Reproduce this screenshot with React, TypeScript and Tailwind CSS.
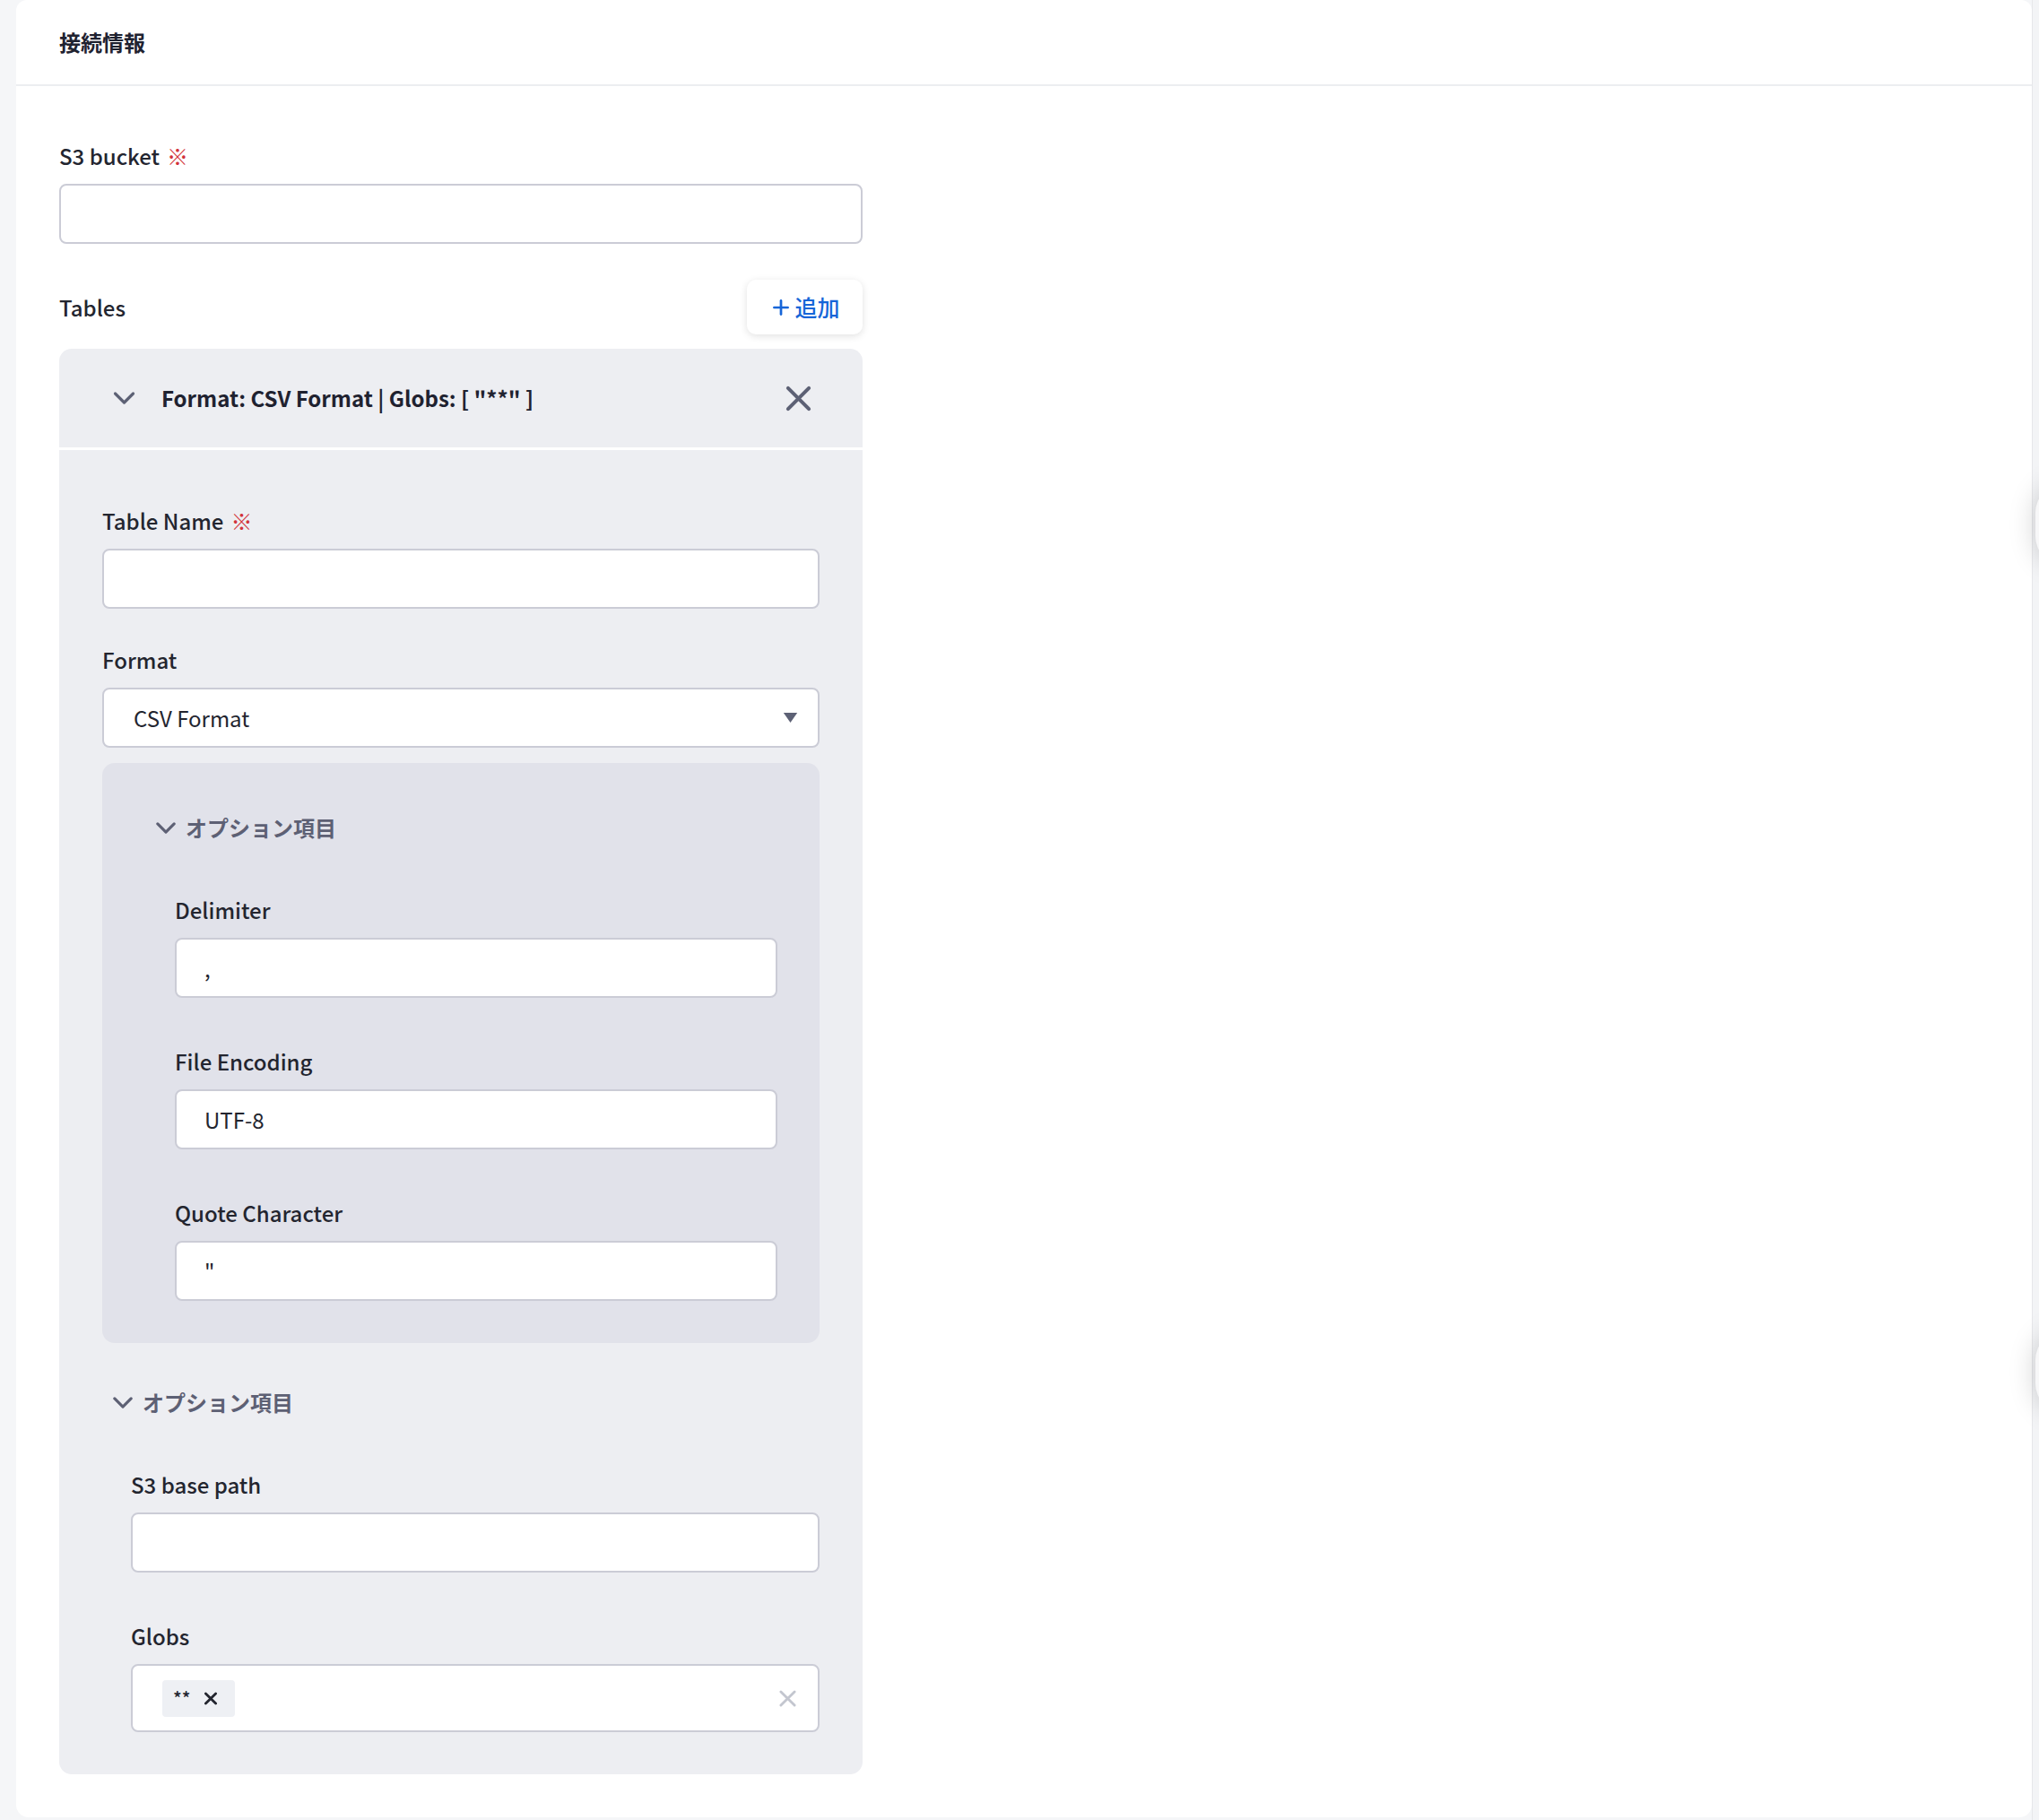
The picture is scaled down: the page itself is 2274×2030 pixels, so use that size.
import { Plus } from "lucide-react";

const font = "font-['Noto_Sans_CJK_JP','Noto_Sans',sans-serif]";

function Chevron({ className, width = 3 }: { className?: string; width?: number }) {
  return (
    <svg viewBox="0 0 24 16" className={className} fill="none">
      <path d="M2 3l10 10 10-10" stroke="currentColor" strokeWidth={width} strokeLinecap="round" strokeLinejoin="round" />
    </svg>
  );
}

function Cross({ className, width = 3 }: { className?: string; width?: number }) {
  return (
    <svg viewBox="0 0 20 20" className={className} fill="none">
      <path d="M2 2l16 16M18 2L2 18" stroke="currentColor" strokeWidth={width} strokeLinecap="round" />
    </svg>
  );
}

function Label({ text, required }: { text: string; required?: boolean }) {
  return (
    <div className="text-[24px] leading-[36px] font-medium text-[#23252f]">
      {text}
      {required && <span className="ml-2 text-[#d2333a]">※</span>}
    </div>
  );
}

function Field({ label, value, required }: { label: string; value?: string; required?: boolean }) {
  return (
    <div>
      <Label text={label} required={required} />
      <div className="mt-[13px] h-[67px] rounded-[8px] border-2 border-[#cbccd6] bg-white flex items-center px-[31px] text-[24px] text-[#23252f]">
        {value}
      </div>
    </div>
  );
}

function OptionHeader() {
  return (
    <div className="flex items-center h-[36px] pl-3 gap-[11px] text-[24px] font-bold text-[#5d6074]">
      <Chevron className="w-[22px] h-[15px] text-[#5d6074]" width={3.4} />
      <span>オプション項目</span>
    </div>
  );
}

export default function App() {
  return (
    <div className={`${font} relative min-h-[2030px] bg-[#f5f6f8] pl-[18px] pr-2 flex overflow-hidden`}>
      {/* main card */}
      <div className="flex-1 bg-white rounded-t-[12px] rounded-b-[14px] h-[2027px]">
        <div className="h-[96px] border-b-2 border-[#eceef1] px-12 flex items-center">
          <h1 className="text-[24px] font-bold text-[#1f2230]">接続情報</h1>
        </div>

        <div className="px-12 pt-[60px] w-[992px]">
          <Field label="S3 bucket" required />

          <div className="mt-[40px] flex items-center justify-between">
            <Label text="Tables" />
            <button className="h-[61px] w-[129px] rounded-[10px] bg-white shadow-[0_2px_8px_rgba(0,0,0,0.12)] flex items-center justify-center gap-[2px] text-[25px] text-[#1665d8] font-medium">
              <Plus className="w-[26px] h-[26px]" strokeWidth={2.5} />
              追加
            </button>
          </div>

          {/* table item */}
          <div className="mt-4 rounded-[14px] bg-[#edeef2] overflow-hidden">
            <div className="h-[113px] border-b-[3px] border-white flex items-center pl-[60px] pr-[57px]">
              <Chevron className="w-[25px] h-[16px] text-[#5d6175]" width={3.2} />
              <span className="ml-[29px] flex-1 text-[24px] font-bold text-[#1f2230]">
                Format: CSV Format | Globs: [ "**" ]
              </span>
              <Cross className="w-[29px] h-[29px] text-[#5d6175]" width={2.8} />
            </div>

            <div className="px-12 pt-[61px] pb-[47px]">
              <Field label="Table Name" required />

              <div className="mt-[39px]">
                <Label text="Format" />
                <div className="mt-[13px] h-[67px] rounded-[8px] border-2 border-[#cbccd6] bg-white flex items-center justify-between pl-[33px] pr-[22px] text-[24px] text-[#23252f]">
                  <span>CSV Format</span>
                  <svg viewBox="0 0 14 10" className="w-[17px] h-[11px]">
                    <path d="M0 0h14L7 10z" fill="#5d6175" />
                  </svg>
                </div>
              </div>

              {/* inner option panel */}
              <div className="mt-[17px] rounded-[14px] bg-[#e1e2ea] pl-12 pr-[47px] pt-[54px] pb-[47px]">
                <OptionHeader />
                <div className="pl-[33px] pt-[56px] flex flex-col gap-[53px]">
                  <Field label="Delimiter" value="," />
                  <Field label="File Encoding" value="UTF-8" />
                  <Field label="Quote Character" value={'"'} />
                </div>
              </div>

              <div className="mt-[48px]">
                <OptionHeader />
                <div className="pl-[32px] pt-[56px] flex flex-col gap-[53px]">
                  <Field label="S3 base path" />
                  <div>
                    <Label text="Globs" />
                    <div className="mt-[13px] h-[76px] rounded-[8px] border-2 border-[#cbccd6] bg-white flex items-center justify-between pl-[33px] pr-[24px]">
                      <div className="h-[41px] w-[81px] rounded-[4px] bg-[#eef0f4] flex items-center pl-[12px] gap-[16px] text-[#23252f]">
                        <span className="text-[20px] font-medium">**</span>
                        <Cross className="w-[14px] h-[15px]" width={4} />
                      </div>
                      <Cross className="w-[19px] h-[21px] text-[#c3c6cf]" width={3} />
                    </div>
                  </div>
                </div>
              </div>
            </div>
          </div>
        </div>
      </div>

      {/* scrollbar track */}
      <div className="absolute right-0 top-0 h-full w-2 bg-[#f3f4f6] border-l border-[#e6e7ea]" />

      {/* floating buttons peeking from the right */}
      <div className="absolute right-[-60px] top-[540px] w-[64px] h-[90px] rounded-full shadow-[0_0_30px_rgba(0,0,0,0.18)] bg-[#f7f7f8]" />
      <div className="absolute right-[-60px] top-[1485px] w-[64px] h-[90px] rounded-full shadow-[0_0_30px_rgba(0,0,0,0.18)] bg-[#f7f7f8]" />
    </div>
  );
}
